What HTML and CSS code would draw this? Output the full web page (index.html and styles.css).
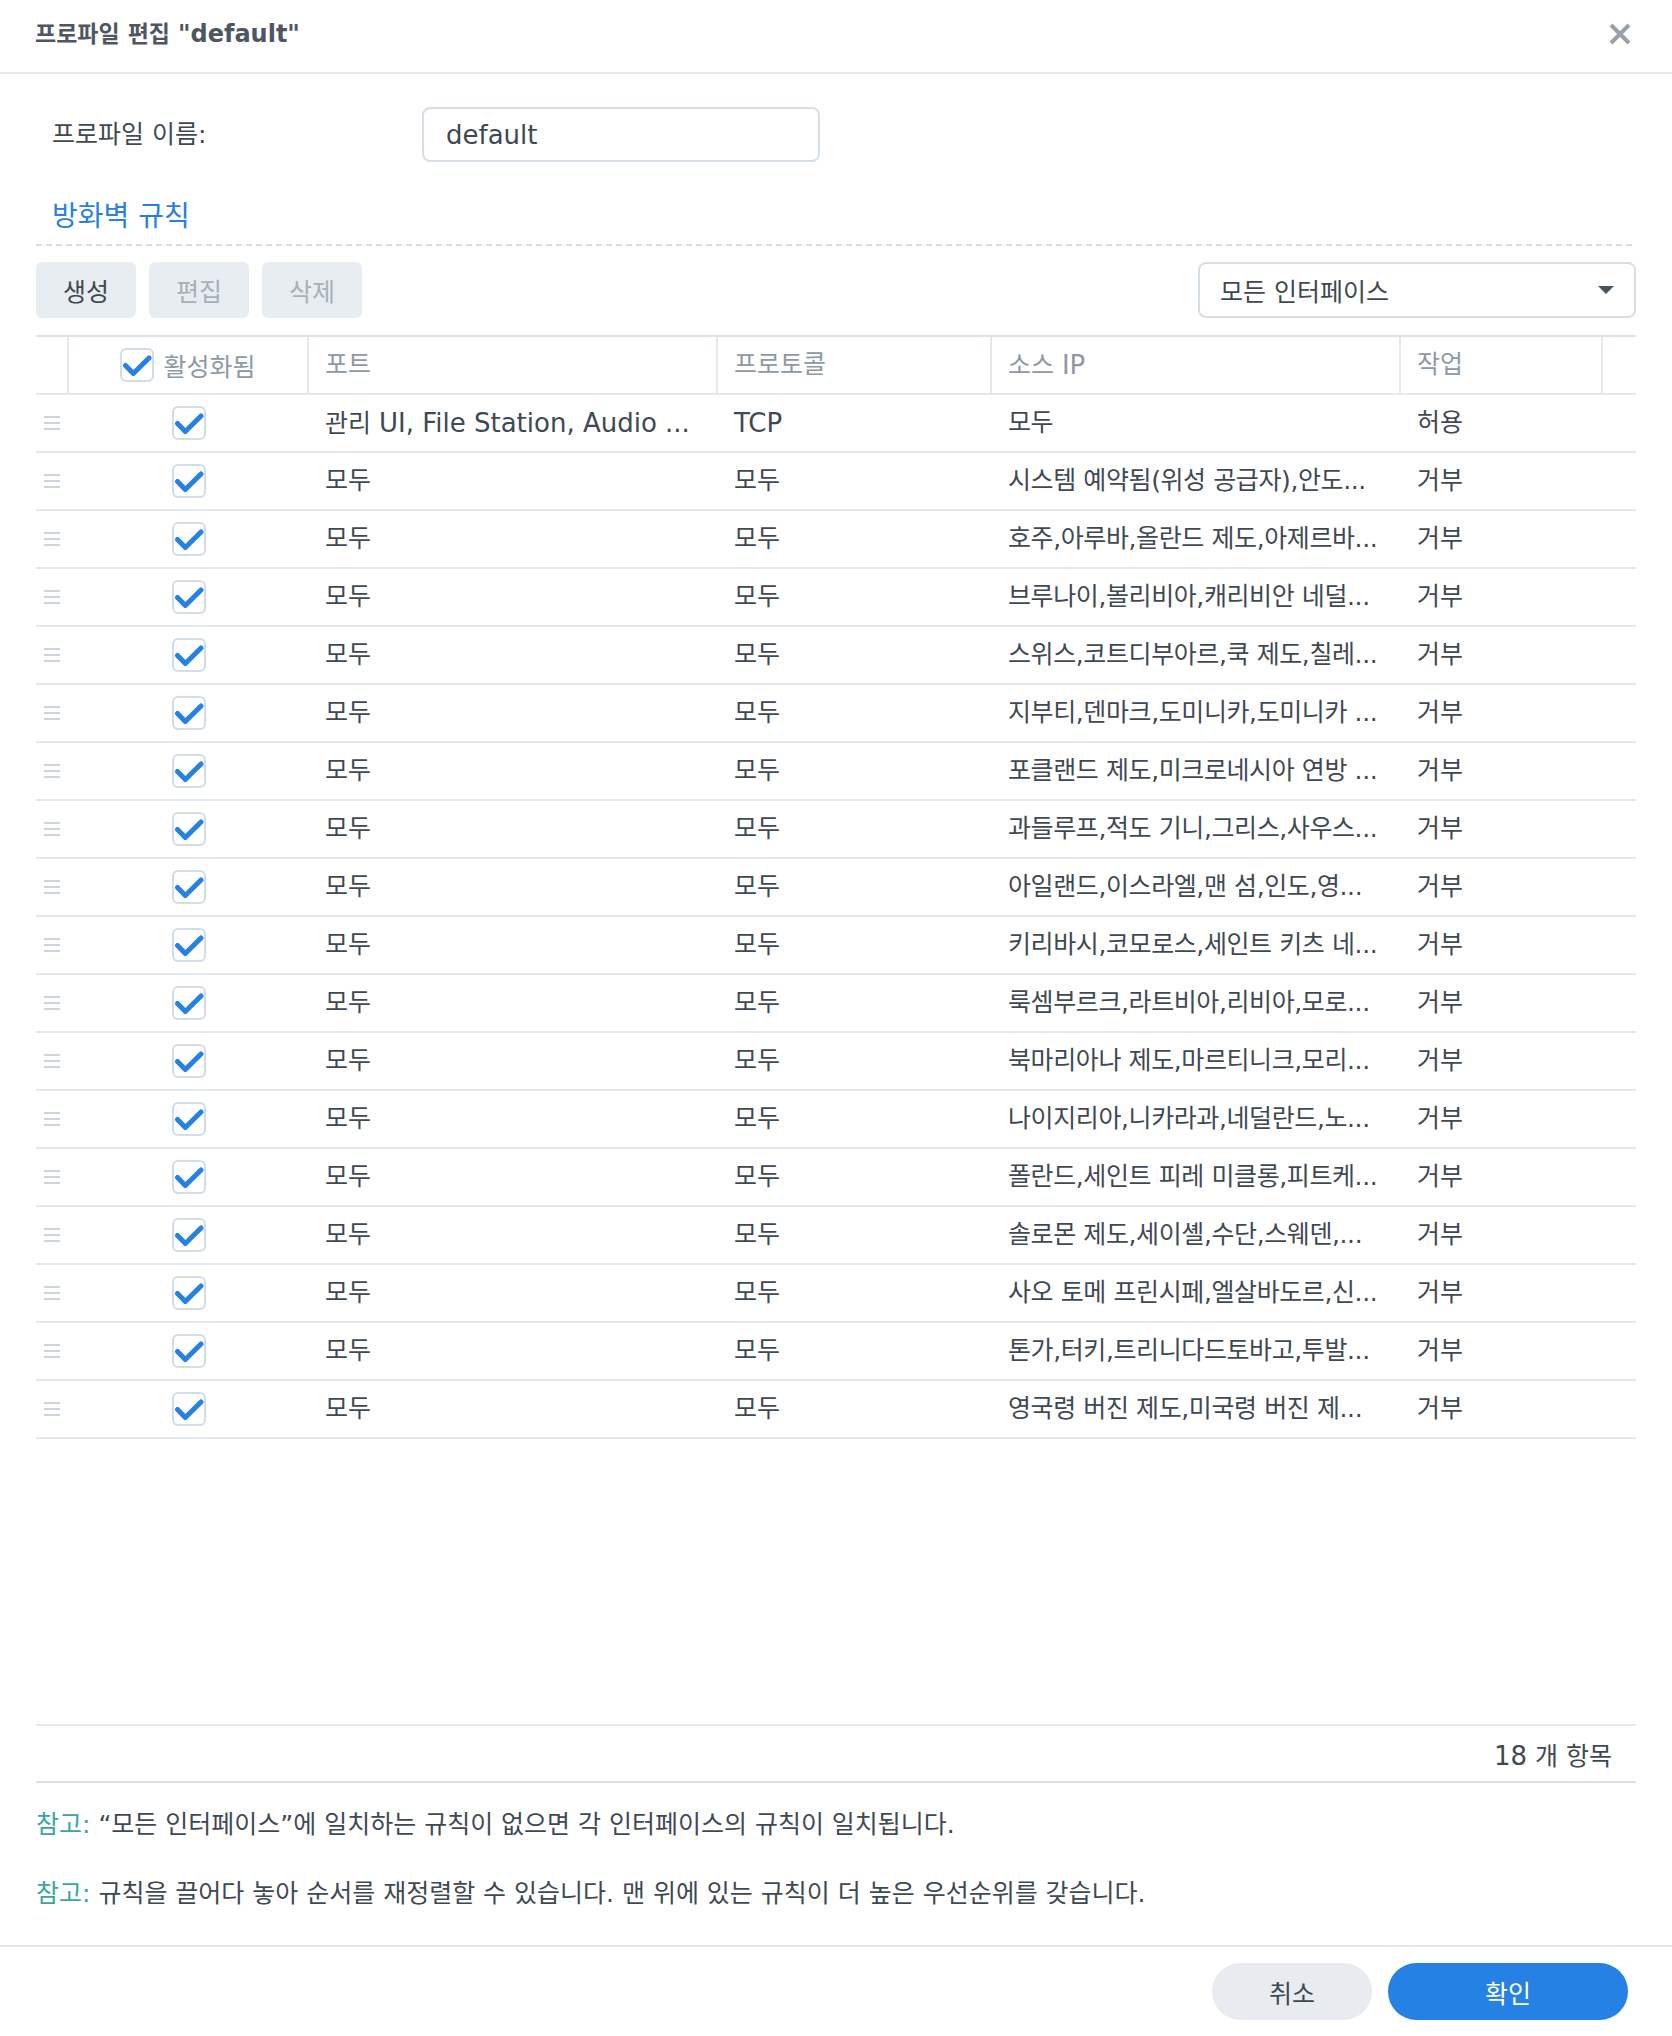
FILE: index.html
```html
<!DOCTYPE html>
<html lang="ko">
<head>
<meta charset="utf-8">
<title>프로파일 편집</title>
<link rel="stylesheet" href="styles.css">
</head>
<body>
<div class="dialog">
  <header class="hd">
    <h1 class="title">프로파일 편집 <span class="en">"default"</span></h1>
    <button class="close" aria-label="닫기">
      <svg width="22" height="22" viewBox="0 0 22 22"><path d="M2 2 L20 20 M20 2 L2 20" stroke="#9aa1a8" stroke-width="4" fill="none"/></svg>
    </button>
  </header>
  <main class="body">
    <div class="form-row">
      <label class="form-label">프로파일 이름:</label>
      <div class="input"><span class="en">default</span></div>
    </div>
    <h2 class="section">방화벽 규칙</h2>
    <div class="dash"></div>
    <div class="toolbar">
      <div class="btns">
        <button class="tb">생성</button>
        <button class="tb dis">편집</button>
        <button class="tb dis">삭제</button>
      </div>
      <div class="select"><span>모든 인터페이스</span><span class="caret"></span></div>
    </div>
    <div class="grid">
      <div class="row head">
        <div class="c"></div>
        <div class="c en-col"><span class="cb"><svg viewBox="0 0 30 30"><path d="M3.5 15.5 L11.3 23.5 L27 8"/></svg></span><span>활성화됨</span></div>
        <div class="c t">포트</div>
        <div class="c t">프로토콜</div>
        <div class="c t">소스 <span class="en">IP</span></div>
        <div class="c t">작업</div>
        <div class="c last"></div>
      </div>
      <div class="row"><div class="c h"><i></i></div><div class="c en-col"><span class="cb"><svg viewBox="0 0 30 30"><path d="M3.5 15.5 L11.3 23.5 L27 8"/></svg></span></div><div class="c t">관리 <span class="en">UI, File Station, Audio ...</span></div><div class="c t"><span class="en">TCP</span></div><div class="c t src">모두</div><div class="c t">허용</div><div class="c"></div></div>
      <div class="row"><div class="c h"><i></i></div><div class="c en-col"><span class="cb"><svg viewBox="0 0 30 30"><path d="M3.5 15.5 L11.3 23.5 L27 8"/></svg></span></div><div class="c t">모두</div><div class="c t">모두</div><div class="c t src">시스템 예약됨(위성 공급자),안도...</div><div class="c t">거부</div><div class="c"></div></div>
      <div class="row"><div class="c h"><i></i></div><div class="c en-col"><span class="cb"><svg viewBox="0 0 30 30"><path d="M3.5 15.5 L11.3 23.5 L27 8"/></svg></span></div><div class="c t">모두</div><div class="c t">모두</div><div class="c t src">호주,아루바,올란드 제도,아제르바...</div><div class="c t">거부</div><div class="c"></div></div>
      <div class="row"><div class="c h"><i></i></div><div class="c en-col"><span class="cb"><svg viewBox="0 0 30 30"><path d="M3.5 15.5 L11.3 23.5 L27 8"/></svg></span></div><div class="c t">모두</div><div class="c t">모두</div><div class="c t src">브루나이,볼리비아,캐리비안 네덜...</div><div class="c t">거부</div><div class="c"></div></div>
      <div class="row"><div class="c h"><i></i></div><div class="c en-col"><span class="cb"><svg viewBox="0 0 30 30"><path d="M3.5 15.5 L11.3 23.5 L27 8"/></svg></span></div><div class="c t">모두</div><div class="c t">모두</div><div class="c t src">스위스,코트디부아르,쿡 제도,칠레...</div><div class="c t">거부</div><div class="c"></div></div>
      <div class="row"><div class="c h"><i></i></div><div class="c en-col"><span class="cb"><svg viewBox="0 0 30 30"><path d="M3.5 15.5 L11.3 23.5 L27 8"/></svg></span></div><div class="c t">모두</div><div class="c t">모두</div><div class="c t src">지부티,덴마크,도미니카,도미니카 ...</div><div class="c t">거부</div><div class="c"></div></div>
      <div class="row"><div class="c h"><i></i></div><div class="c en-col"><span class="cb"><svg viewBox="0 0 30 30"><path d="M3.5 15.5 L11.3 23.5 L27 8"/></svg></span></div><div class="c t">모두</div><div class="c t">모두</div><div class="c t src">포클랜드 제도,미크로네시아 연방 ...</div><div class="c t">거부</div><div class="c"></div></div>
      <div class="row"><div class="c h"><i></i></div><div class="c en-col"><span class="cb"><svg viewBox="0 0 30 30"><path d="M3.5 15.5 L11.3 23.5 L27 8"/></svg></span></div><div class="c t">모두</div><div class="c t">모두</div><div class="c t src">과들루프,적도 기니,그리스,사우스...</div><div class="c t">거부</div><div class="c"></div></div>
      <div class="row"><div class="c h"><i></i></div><div class="c en-col"><span class="cb"><svg viewBox="0 0 30 30"><path d="M3.5 15.5 L11.3 23.5 L27 8"/></svg></span></div><div class="c t">모두</div><div class="c t">모두</div><div class="c t src">아일랜드,이스라엘,맨 섬,인도,영...</div><div class="c t">거부</div><div class="c"></div></div>
      <div class="row"><div class="c h"><i></i></div><div class="c en-col"><span class="cb"><svg viewBox="0 0 30 30"><path d="M3.5 15.5 L11.3 23.5 L27 8"/></svg></span></div><div class="c t">모두</div><div class="c t">모두</div><div class="c t src">키리바시,코모로스,세인트 키츠 네...</div><div class="c t">거부</div><div class="c"></div></div>
      <div class="row"><div class="c h"><i></i></div><div class="c en-col"><span class="cb"><svg viewBox="0 0 30 30"><path d="M3.5 15.5 L11.3 23.5 L27 8"/></svg></span></div><div class="c t">모두</div><div class="c t">모두</div><div class="c t src">룩셈부르크,라트비아,리비아,모로...</div><div class="c t">거부</div><div class="c"></div></div>
      <div class="row"><div class="c h"><i></i></div><div class="c en-col"><span class="cb"><svg viewBox="0 0 30 30"><path d="M3.5 15.5 L11.3 23.5 L27 8"/></svg></span></div><div class="c t">모두</div><div class="c t">모두</div><div class="c t src">북마리아나 제도,마르티니크,모리...</div><div class="c t">거부</div><div class="c"></div></div>
      <div class="row"><div class="c h"><i></i></div><div class="c en-col"><span class="cb"><svg viewBox="0 0 30 30"><path d="M3.5 15.5 L11.3 23.5 L27 8"/></svg></span></div><div class="c t">모두</div><div class="c t">모두</div><div class="c t src">나이지리아,니카라과,네덜란드,노...</div><div class="c t">거부</div><div class="c"></div></div>
      <div class="row"><div class="c h"><i></i></div><div class="c en-col"><span class="cb"><svg viewBox="0 0 30 30"><path d="M3.5 15.5 L11.3 23.5 L27 8"/></svg></span></div><div class="c t">모두</div><div class="c t">모두</div><div class="c t src">폴란드,세인트 피레 미클롱,피트케...</div><div class="c t">거부</div><div class="c"></div></div>
      <div class="row"><div class="c h"><i></i></div><div class="c en-col"><span class="cb"><svg viewBox="0 0 30 30"><path d="M3.5 15.5 L11.3 23.5 L27 8"/></svg></span></div><div class="c t">모두</div><div class="c t">모두</div><div class="c t src">솔로몬 제도,세이셸,수단,스웨덴,...</div><div class="c t">거부</div><div class="c"></div></div>
      <div class="row"><div class="c h"><i></i></div><div class="c en-col"><span class="cb"><svg viewBox="0 0 30 30"><path d="M3.5 15.5 L11.3 23.5 L27 8"/></svg></span></div><div class="c t">모두</div><div class="c t">모두</div><div class="c t src">사오 토메 프린시페,엘살바도르,신...</div><div class="c t">거부</div><div class="c"></div></div>
      <div class="row"><div class="c h"><i></i></div><div class="c en-col"><span class="cb"><svg viewBox="0 0 30 30"><path d="M3.5 15.5 L11.3 23.5 L27 8"/></svg></span></div><div class="c t">모두</div><div class="c t">모두</div><div class="c t src">톤가,터키,트리니다드토바고,투발...</div><div class="c t">거부</div><div class="c"></div></div>
      <div class="row"><div class="c h"><i></i></div><div class="c en-col"><span class="cb"><svg viewBox="0 0 30 30"><path d="M3.5 15.5 L11.3 23.5 L27 8"/></svg></span></div><div class="c t">모두</div><div class="c t">모두</div><div class="c t src">영국령 버진 제도,미국령 버진 제...</div><div class="c t">거부</div><div class="c"></div></div>
    </div>
    <div class="paging"><span><span class="en">18</span> 개 항목</span></div>
    <div class="notes">
      <p class="note"><span class="nl">참고:</span> “모든 인터페이스”에 일치하는 규칙이 없으면 각 인터페이스의 규칙이 일치됩니다.</p>
      <p class="note"><span class="nl">참고:</span> 규칙을 끌어다 놓아 순서를 재정렬할 수 있습니다. 맨 위에 있는 규칙이 더 높은 우선순위를 갖습니다.</p>
    </div>
  </main>
  <footer class="ft">
    <button class="btn cancel">취소</button>
    <button class="btn ok">확인</button>
  </footer>
</div>
</body>
</html>
```

FILE: styles.css
```css
* { box-sizing: border-box; }
html, body { margin: 0; padding: 0; background: #fff; }
body {
  font-family: "DejaVu Sans", "Noto Sans CJK KR", sans-serif;
  font-size: 25px;
  color: #3f4953;
}
button { font-family: inherit; font-size: inherit; border: 0; cursor: pointer; }
.en { font-size: 26px; }

.dialog {
  width: 1672px;
  height: 2036px;
  display: flex;
  flex-direction: column;
  background: #fff;
}

/* header */
.hd {
  height: 74px;
  flex: none;
  border-bottom: 2px solid #e4e8ec;
  display: flex;
  align-items: center;
  justify-content: space-between;
  padding: 0 41px 4px 35px;
}
.title {
  margin: 0;
  font-size: 23px;
  font-weight: bold;
  color: #4e5761;
  line-height: 30px;
}
.title .en { font-size: 24px; }
.close {
  background: transparent;
  width: 22px;
  height: 22px;
  padding: 0;
  display: flex;
}

/* body */
.body {
  flex: 1;
  display: flex;
  flex-direction: column;
  padding: 0 36px;
  min-height: 0;
}
.form-row {
  margin-top: 33px;
  height: 55px;
  display: grid;
  grid-template-columns: 386px 398px;
  align-items: center;
}
.form-label { padding-left: 16px; line-height: 30px; }
.input {
  height: 55px;
  border: 2px solid #d6dfe8;
  border-radius: 8px;
  display: flex;
  align-items: center;
  padding-left: 22px;
}
.section {
  margin: 35px 0 0;
  height: 40px;
  line-height: 40px;
  padding-left: 16px;
  font-size: 28px;
  font-weight: normal;
  color: #2a7fe3;
}
.dash {
  margin-top: 7px;
  height: 2px;
  background: repeating-linear-gradient(to right, #d6dee7 0 6px, transparent 6px 10px);
}
.toolbar {
  margin-top: 16px;
  height: 56px;
  display: flex;
  justify-content: space-between;
}
.btns { display: flex; gap: 13px; }
.tb {
  width: 100px;
  height: 56px;
  background: #e8edf1;
  border-radius: 6px;
  color: #3f4953;
}
.tb.dis { color: #a7b0b9; }
.select {
  width: 438px;
  height: 56px;
  border: 2px solid #d6dfe8;
  border-radius: 8px;
  display: flex;
  align-items: center;
  justify-content: space-between;
  padding: 0 20px 0 20px;
}
.caret {
  width: 0;
  height: 0;
  border-left: 8px solid transparent;
  border-right: 8px solid transparent;
  border-top: 8px solid #4a545e;
}

/* grid */
.grid {
  flex: 1;
  margin-top: 17px;
  border-top: 2px solid #dbe2ea;
  min-height: 0;
}
.row {
  display: grid;
  grid-template-columns: 33px 240px 409px 274px 409px 202px 33px;
  height: 58px;
  border-bottom: 2px solid #e4e9ee;
}
.row.head { color: #8e99a4; }
.row.head .c { border-right: 2px solid #e3e8ee; }
.row.head .c.last { border-right: 0; }
.c {
  display: flex;
  align-items: center;
  min-width: 0;
}
.c.t {
  padding: 0 16px;
  white-space: nowrap;
  overflow: hidden;
  text-overflow: ellipsis;
  display: block;
  line-height: 56px;
}
.c.t.src {
  letter-spacing: -0.4px;
  padding-right: 6px;
}
.en-col { justify-content: center; gap: 9px; }
.cb {
  width: 34px;
  height: 34px;
  border: 2px solid #d3dde7;
  border-radius: 6px;
  display: inline-flex;
  flex: none;
}
.cb svg { width: 30px; height: 30px; }
.cb path {
  fill: none;
  stroke: #2581e4;
  stroke-width: 5;
  stroke-linecap: round;
  stroke-linejoin: round;
}
.c.h { justify-content: center; padding-right: 2px; }
.c.h i {
  display: block;
  width: 16px;
  height: 14px;
  background: linear-gradient(#cdd6df 0 2px, transparent 2px 6px, #cdd6df 6px 8px, transparent 8px 12px, #cdd6df 12px 14px);
}

/* paging */
.paging {
  flex: none;
  height: 59px;
  border-top: 2px solid #e4e9ee;
  border-bottom: 2px solid #d9e1e9;
  display: flex;
  align-items: center;
  justify-content: flex-end;
  padding-right: 24px;
}

/* notes */
.notes {
  flex: none;
  padding: 25px 0 34px;
}
.note {
  margin: 0;
  line-height: 34px;
}
.note + .note { margin-top: 35px; }
.nl { color: #3aa6a3; }

/* footer */
.ft {
  flex: none;
  height: 91px;
  border-top: 2px solid #e4e8ec;
  display: flex;
  justify-content: flex-end;
  align-items: flex-start;
  gap: 16px;
  padding: 16px 44px 0 0;
}
.btn {
  height: 57px;
  border-radius: 29px;
}
.cancel {
  width: 160px;
  background: #e8ecf0;
  color: #3f4953;
}
.ok {
  width: 240px;
  background: #2581e4;
  color: #fff;
}
```
